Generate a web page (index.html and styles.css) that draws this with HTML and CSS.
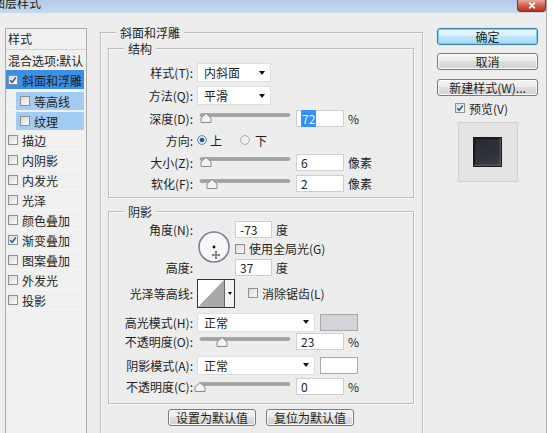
FILE: index.html
```html
<!DOCTYPE html>
<html lang="zh-CN">
<head>
<meta charset="utf-8">
<title>图层样式</title>
<link rel="stylesheet" href="styles.css">
</head>
<body>
<div class="window">
  <div class="titlebar">
    <span class="title">图层样式</span>
    <span class="close"><svg width="10" height="7" viewBox="0 0 10 7"><path d="M2.2 0.6 L7.8 6.4 M7.8 0.6 L2.2 6.4" stroke="#fff" stroke-width="1.7"/></svg></span>
  </div>
  <div class="body">
    <div class="sidebar">
      <div class="side-head">样式</div>
      <div class="side-row">混合选项:默认</div>
      <div class="side-row selected"><span class="cb"><svg viewBox="0 0 8 8" width="8" height="8"><path d="M1.2 4.2 L3.2 6.3 L6.8 1.5" fill="none" stroke="#2a57a6" stroke-width="1.5"/></svg></span>斜面和浮雕</div>
      <div class="side-row sub"><div class="sub-hl"><span class="cb"></span>等高线</div></div>
      <div class="side-row sub"><div class="sub-hl"><span class="cb"></span>纹理</div></div>
      <div class="side-row"><span class="cb"></span>描边</div>
      <div class="side-row"><span class="cb"></span>内阴影</div>
      <div class="side-row"><span class="cb"></span>内发光</div>
      <div class="side-row"><span class="cb"></span>光泽</div>
      <div class="side-row"><span class="cb"></span>颜色叠加</div>
      <div class="side-row"><span class="cb"><svg viewBox="0 0 8 8" width="8" height="8"><path d="M1.2 4.2 L3.2 6.3 L6.8 1.5" fill="none" stroke="#2a57a6" stroke-width="1.5"/></svg></span>渐变叠加</div>
      <div class="side-row"><span class="cb"></span>图案叠加</div>
      <div class="side-row"><span class="cb"></span>外发光</div>
      <div class="side-row"><span class="cb"></span>投影</div>
    </div>

    <div class="main">
      <div class="group outer">
        <div class="group-title outer-title">斜面和浮雕</div>

        <div class="group inner struct">
          <div class="group-title">结构</div>
          <div class="row h23"><span class="lbl">样式(T):</span><div class="select w74"><span>内斜面</span><i class="arrow"></i></div></div>
          <div class="row h23"><span class="lbl">方法(Q):</span><div class="select w74"><span>平滑</span><i class="arrow"></i></div></div>
          <div class="row h22"><span class="lbl">深度(D):</span>
            <svg class="slider" width="96" height="14" viewBox="0 0 96 14"><rect class="track" x="3" y="2.5" width="90" height="3" rx="1.5"/><path class="thumb" d="M4 11.5 V7 L9 2.5 L14 7 V11.5 Z"/></svg>
            <div class="num"><span class="sel-text">72</span></div><span class="unit">%</span></div>
          <div class="row h22"><span class="lbl">方向:</span>
            <svg class="radio" width="10" height="10" viewBox="0 0 10 10"><circle cx="5" cy="5" r="4.4" class="radio-on"/><circle cx="5" cy="5" r="2.3" fill="#1f5a8c"/></svg><span class="rtext">上</span>
            <svg class="radio r2" width="10" height="10" viewBox="0 0 10 10"><circle cx="5" cy="5" r="4.4" class="radio-off"/></svg><span class="rtext r2t">下</span></div>
          <div class="row h22"><span class="lbl">大小(Z):</span>
            <svg class="slider" width="96" height="14" viewBox="0 0 96 14"><rect class="track" x="3" y="2.5" width="90" height="3" rx="1.5"/><path class="thumb" d="M4 11.5 V7 L9 2.5 L14 7 V11.5 Z"/></svg>
            <div class="num">6</div><span class="unit">像素</span></div>
          <div class="row h21"><span class="lbl">软化(F):</span>
            <svg class="slider" width="96" height="14" viewBox="0 0 96 14"><rect class="track" x="3" y="2.5" width="90" height="3" rx="1.5"/><path class="thumb" d="M10 11.5 V7 L15 2.5 L20 7 V11.5 Z"/></svg>
            <div class="num">2</div><span class="unit">像素</span></div>
        </div>

        <div class="group inner shadow">
          <div class="group-title">阴影</div>
          <div class="angle-grid">
            <span class="lbl a1">角度(N):</span>
            <svg class="dial" width="36" height="38" viewBox="0 0 36 38"><circle cx="17" cy="18" r="15" fill="#f7f7f9" stroke="#7b7f95" stroke-width="1.6"/><circle cx="17" cy="18" r="1.4" fill="#111"/><path d="M19 22.5 V29.5 M15.5 26 H22.5" stroke="#444" stroke-width="0.9"/><path d="M19 21.8 L17.8 23.4 H20.2 Z M19 30.2 L17.8 28.6 H20.2 Z M14.8 26 L16.4 24.8 V27.2 Z M23.2 26 L21.6 24.8 V27.2 Z" fill="#444"/></svg>
            <div class="c3 a1"><div class="num w37">-73</div><span class="unit">度</span></div>
            <div class="c3 a2"><span class="cb"></span><span class="cbt">使用全局光(G)</span></div>
            <span class="lbl a3">高度:</span>
            <div class="c3 a3"><div class="num w37">37</div><span class="unit">度</span></div>
          </div>
          <div class="row h32"><span class="lbl">光泽等高线:</span>
            <div class="contour"><svg width="26" height="27" viewBox="0 0 26 27"><rect width="26" height="27" fill="#fff"/><polygon points="0,27 26,0 26,27" fill="#a9a9a9"/></svg><div class="contour-drop"><i class="arrow"></i></div></div>
            <span class="cb anti"></span><span class="cbt">消除锯齿(L)</span></div>
          <div class="row h22 mt2"><span class="lbl">高光模式(H):</span><div class="select w118"><span>正常</span><i class="arrow"></i></div><div class="swatch hl-swatch"></div></div>
          <div class="row h17"><span class="lbl">不透明度(O):</span>
            <svg class="slider" width="96" height="14" viewBox="0 0 96 14"><rect class="track" x="3" y="2.5" width="90" height="3" rx="1.5"/><path class="thumb" d="M20 11.5 V7 L25 2.5 L30 7 V11.5 Z"/></svg>
            <div class="num">23</div><span class="unit">%</span></div>
          <div class="row h22 mt4"><span class="lbl">阴影模式(A):</span><div class="select w118"><span>正常</span><i class="arrow"></i></div><div class="swatch sh-swatch"></div></div>
          <div class="row h21"><span class="lbl">不透明度(C):</span>
            <svg class="slider" width="96" height="14" viewBox="0 0 96 14"><rect class="track" x="3" y="2.5" width="90" height="3" rx="1.5"/><path class="thumb" d="M-2 11.5 V7 L3 2.5 L8 7 V11.5 Z"/></svg>
            <div class="num">0</div><span class="unit">%</span></div>
        </div>

        <div class="bottom-buttons">
          <button class="btn wide">设置为默认值</button>
          <button class="btn wide">复位为默认值</button>
        </div>
      </div>
    </div>

    <div class="actions">
      <button class="btn side default">确定</button>
      <button class="btn side b2">取消</button>
      <button class="btn side">新建样式(W)...</button>
      <div class="preview-check"><span class="cb"><svg viewBox="0 0 8 8" width="8" height="8"><path d="M1.2 4.2 L3.2 6.3 L6.8 1.5" fill="none" stroke="#2a57a6" stroke-width="1.5"/></svg></span>预览(V)</div>
      <div class="preview"><div class="preview-square"></div></div>
    </div>
  </div>
</div>
</body>
</html>
```
FILE: styles.css
```css
* { box-sizing: border-box; }
html, body { margin: 0; padding: 0; background: #ffffff; }
body {
  width: 553px; height: 433px; overflow: hidden;
  font-family: "Noto Sans CJK SC", "Microsoft YaHei", sans-serif;
  font-size: 12px; color: #1e1e1e;
}
.window {
  width: 547px; height: 433px; background: #ededed;
  border-right: 1px solid #a9a9a9; overflow: hidden;
}
.titlebar {
  height: 13px; background: linear-gradient(#b3cbe6, #c8d9ee);
  display: flex; justify-content: space-between; align-items: flex-start; overflow: hidden;
}
.title { font-size: 12px; line-height: 12px; margin: -3px 0 0 -7px; color: #1a1a1a; white-space: nowrap; }
.close {
  width: 29px; height: 12px; margin-right: 0;
  background: linear-gradient(#e7a99b, #cf5846 55%, #b9321f);
  border: 1px solid #8a2e22; border-top: none; border-radius: 0 0 4px 4px;
  display: flex; align-items: center; justify-content: center;
}
.body { display: flex; align-items: flex-start; padding: 15px 0 0 5px; }

/* sidebar */
.sidebar { width: 82px; height: 420px; border: 1px solid #adadad; background: #f0f0f0; flex: none; }
.side-head { height: 21px; line-height: 19px; padding-left: 2px; border-bottom: 1px solid #d2d2d2; }
.side-row { height: 20px; display: flex; align-items: center; padding-left: 2px; white-space: nowrap; box-shadow: inset 0 -1px 0 #f7f7f7; }
.side-row.selected { background: #3b8fe6; margin-right: 2px; }
.side-row.sub { padding: 2px 0 0 0; align-items: stretch; }
.sub-hl { flex: 1; margin: 0 2px 0 10px; background: #a3ccf2; display: flex; align-items: center; padding-left: 4px; }
.cb {
  width: 10px; height: 10px; border: 1px solid #8e8f8f; flex: none;
  background: linear-gradient(135deg, #d9d9d9, #fbfbfb);
  display: inline-flex; align-items: center; justify-content: center; margin-right: 4px;
}

/* main groups */
.main { margin: 4px 0 0 13px; flex: none; }
.group { border: 1px solid #bdbdbd; box-shadow: inset 1px 1px 0 #fbfbfb, 1px 1px 0 #fbfbfb; }
.outer { width: 323px; height: 420px; padding: 0 8px 0 7px; }
.group-title { display: table; margin: -8px 0 0 15px; padding: 0 4px; line-height: 16px; background: #ededed; }
.outer-title { margin-left: 8px; }
.inner { width: 306px; }
.struct { margin-top: 7px; padding: 4px 0 3px 0; }
.struct > .group-title { margin-top: -12px; margin-bottom: 4px; }
.shadow { margin-top: 13px; padding: 1px 0 6px 0; }
.shadow > .group-title { margin-top: -9px; }

.row { display: flex; align-items: center; white-space: nowrap; }
.h23 { height: 23px; } .h22 { height: 22px; } .h21 { height: 21px; } .h17 { height: 17px; } .h32 { height: 32px; }
.mt2 { margin-top: 2px; } .mt4 { margin-top: 4px; }
.lbl { width: 86px; text-align: right; padding-right: 2px; flex: none; }

.select {
  height: 19px; background: #fff; border: 1px solid #dedede;
  display: flex; align-items: center; justify-content: space-between; padding: 0 5px 0 6px; margin-left: 2px;
}
.w74 { width: 74px; } .w118 { width: 118px; }
.arrow { display: inline-block; width: 0; height: 0; border-left: 3.5px solid transparent; border-right: 3.5px solid transparent; border-top: 4px solid #111; }

.slider { margin-left: 2px; overflow: visible; flex: none; }
.track { fill: #a3a3a3; stroke: #8a8a8a; stroke-width: 0.5; }
.thumb { fill: #f2f2f2; stroke: #8b8b8b; stroke-width: 1; }

.num {
  width: 48px; height: 17px; margin-left: 3px; background: #fff; border: 1px solid #cfcfcf;
  padding-left: 4px; line-height: 15px; font-size: 12px; color: #222;
}
.w37 { width: 37px; margin-left: 0; }
.sel-text { background: #3390ff; color: #e8f0ff; padding: 0 1px; }
.unit { margin-left: 4px; }

.radio { margin-left: 2px; flex: none; }
.radio-on { fill: #dfe9f4; stroke: #4c79a6; stroke-width: 0.9; }
.radio-off { fill: #f0f0f0; stroke: #a2a2a2; stroke-width: 0.9; }
.rtext { margin-left: 3px; }
.r2 { margin-left: 18px; }
.r2t { margin-left: 5px; }

.angle-grid {
  display: grid; grid-template-columns: 86px 40px 1fr; grid-template-rows: 19px 19px 19px;
  align-items: center;
}
.a1 { grid-row: 1; } .a2 { grid-row: 2; } .a3 { grid-row: 3; }
.angle-grid .lbl { grid-column: 1; }
.dial { grid-column: 2; grid-row: 1 / span 3; margin-left: 2px; margin-top: -1px; }
.c3 { grid-column: 3; display: flex; align-items: center; white-space: nowrap; }
.cbt { margin-left: 0; }

.contour { display: flex; width: 38px; height: 29px; border: 1px solid #333; margin-left: 2px; background: #fff; flex: none; }
.contour-drop { flex: 1; border-left: 1px solid #666; display: flex; align-items: center; justify-content: center; background: #f4f4f4; }
.contour-drop .arrow { border-left-width: 2.5px; border-right-width: 2.5px; border-top-width: 3px; }
.anti { margin-left: 13px; }

.swatch { width: 38px; height: 17px; margin-left: 5px; border: 1px solid #a8a8a8; }
.hl-swatch { background: #d3d3da; }
.sh-swatch { background: #ffffff; }

.btn {
  font-family: inherit; font-size: 12px; color: #1e1e1e; padding: 0; margin: 0;
  height: 17px; line-height: 15px; border: 1px solid #7a7a7a; border-radius: 3px;
  background: linear-gradient(#f4f4f4, #ececec 45%, #dedede 50%, #d2d2d2);
  box-shadow: inset 0 0 0 1px #fbfbfb;
}
.bottom-buttons { display: flex; justify-content: center; gap: 10px; margin-top: 5px; }
.wide { width: 88px; }

.actions { margin: 0 0 0 14px; width: 101px; display: flex; flex-direction: column; align-items: center; flex: none; }
.side { width: 101px; margin-bottom: 8px; }
.b2 { margin-bottom: 9px; }
.default {
  border-color: #3c7fb1; background: linear-gradient(#eaf6fd, #d9f0fc 45%, #bee6fd 50%, #a7d9f5);
  box-shadow: inset 0 0 0 1px #6fd3f8, 0 0 1px #52b8e8;
}
.preview-check { height: 18px; margin-top: -5px; display: flex; align-items: center; padding-right: 12px; }
.preview { width: 60px; height: 60px; margin-top: 5px; border: 1px solid #d2d2d2; background: #e3e3e3; display: flex; align-items: center; justify-content: center; }
.preview-square {
  width: 29px; height: 30px; border: 1px solid #1a1b1f;
  background: linear-gradient(160deg, #2a2b31, #30323a 60%, #3e414b);
  box-shadow: inset -1px -1px 2px #5a5e6b, inset 1px 1px 1px #15161a;
}
```
